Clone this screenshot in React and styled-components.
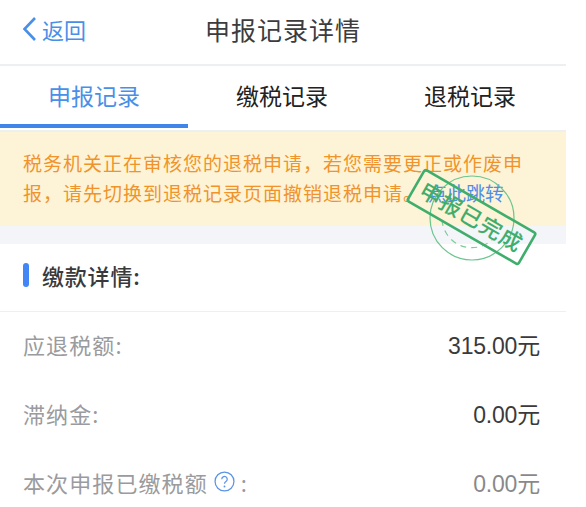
import styled, { createGlobalStyle } from 'styled-components'

const cjk = `"Noto Sans CJK SC", "Liberation Sans", sans-serif`

const Global = createGlobalStyle`
  html, body { margin: 0; padding: 0; background: #fff; }
  body { font-family: ${cjk}; overflow: hidden; }
`

const Page = styled.div`
  width: 566px;
  height: 507px;
  overflow: hidden;
  position: relative;
  background: #fff;
`

const Header = styled.header`
  height: 64px;
  display: flex;
  align-items: center;
  justify-content: center;
  position: relative;
  border-bottom: 2px solid #eeeff1;
`

const Back = styled.div`
  position: absolute;
  left: 22px;
  top: 14px;
  display: flex;
  align-items: center;
  gap: 5px;
  color: #4a8fe7;
  font-size: 22px;
  line-height: 30px;
`

const Title = styled.h1`
  margin: 0 0 7px 0;
  font-size: 25px;
  font-weight: 400;
  color: #3c3c3e;
  letter-spacing: 1px;
`

const Tabs = styled.nav`
  height: 64px;
  display: flex;
  padding-right: 2px;
  border-bottom: 2px solid #eeeff1;
`

const Tab = styled.div`
  flex: 1;
  display: flex;
  align-items: center;
  justify-content: center;
  margin-bottom: 2px;
  font-size: 23px;
  color: ${p => (p.$active ? '#4a8fe7' : '#222')};
  border-bottom: 4px solid ${p => (p.$active ? '#4285e8' : 'transparent')};
`

const Notice = styled.div`
  height: 94px;
  padding: 16px 36px 0 23px;
  box-sizing: border-box;
  background: #fdf3d6;
  color: #f0932b;
  font-size: 19px;
  line-height: 30px;
  letter-spacing: 1px;
`

const Jump = styled.span`
  color: #4f8ee8;
  letter-spacing: 0;
  margin-left: 5px;
`

const Gap = styled.div`
  height: 18px;
  background: #f3f5f8;
`

const SectionTitle = styled.div`
  height: 67px;
  box-sizing: content-box;
  display: flex;
  align-items: center;
  gap: 13px;
  padding-left: 23px;
  border-bottom: 1px solid #eeeff1;
  font-size: 22px;
  font-weight: 500;
  color: #3a3a3c;
  letter-spacing: 0.8px;
`

const SectionText = styled.span`
  margin-bottom: 6px;
`

const Bar = styled.span`
  width: 6px;
  height: 24px;
  margin-bottom: 5px;
  border-radius: 3px;
  background: #4285f4;
`

const Row = styled.div`
  height: 69px;
  box-sizing: border-box;
  display: flex;
  align-items: center;
  justify-content: space-between;
  padding: 0 26px 6px 23px;
`

const Label = styled.div`
  display: flex;
  align-items: center;
  gap: 6px;
  font-size: 22px;
  color: #9a9b9e;
  letter-spacing: 1.1px;
`

const Value = styled.div`
  font-size: 23px;
  color: #3a3a3c;
  letter-spacing: -0.2px;
  font-family: "Liberation Sans", ${cjk};
  opacity: ${p => (p.$faded ? 0.6 : 1)};
`

const Stamp = styled.svg`
  position: absolute;
  left: 400px;
  top: 160px;
  pointer-events: none;
`

const StampText = styled.text`
  font-family: ${cjk};
  font-size: 22px;
  font-weight: 500;
  fill: #3fae6d;
  letter-spacing: 1px;
  text-anchor: middle;
`

export default function App() {
  return (
    <Page>
      <Global />
      <Header>
        <Back>
          <svg width="15" height="26" viewBox="0 0 15 26">
            <path d="M13 2 L2.5 13 L13 24" fill="none" stroke="#4a8fe7" strokeWidth="2.6" />
          </svg>
          返回
        </Back>
        <Title>申报记录详情</Title>
      </Header>
      <Tabs>
        <Tab $active>申报记录</Tab>
        <Tab>缴税记录</Tab>
        <Tab>退税记录</Tab>
      </Tabs>
      <Notice>
        税务机关正在审核您的退税申请，若您需要更正或作废申报，请先切换到退税记录页面撤销退税申请。<Jump>点此跳转</Jump>
      </Notice>
      <Gap />
      <SectionTitle>
        <Bar />
        <SectionText>缴款详情:</SectionText>
      </SectionTitle>
      <Row>
        <Label>应退税额:</Label>
        <Value>315.00元</Value>
      </Row>
      <Row>
        <Label>滞纳金:</Label>
        <Value>0.00元</Value>
      </Row>
      <Row>
        <Label>
          本次申报已缴税额
          <svg width="21" height="21" viewBox="0 0 20 20">
            <circle cx="10" cy="10" r="9" fill="none" stroke="#5a94e6" strokeWidth="1.2" />
            <path d="M7.4 7.8a2.6 2.6 0 1 1 4 2.2c-.9.6-1.4 1-1.4 2.2" fill="none" stroke="#5a94e6" strokeWidth="1.2" />
            <circle cx="10" cy="14.8" r="0.9" fill="#5a94e6" />
          </svg>
          :
        </Label>
        <Value $faded>0.00元</Value>
      </Row>
      <Stamp width="145" height="115" viewBox="0 0 145 115">
        <circle cx="72" cy="58" r="42" fill="none" stroke="#6cc48f" strokeWidth="1.2" />
        <path d="M42 60 A30 30 0 0 0 92 80" fill="none" stroke="#7ccb9c" strokeWidth="1.2" strokeDasharray="6 5" />
        <g transform="rotate(30 71.5 57)">
          <rect x="7.5" y="39" width="128" height="36" rx="2" fill="none" stroke="#3fae6d" strokeWidth="2.6" />
          <StampText x="71.5" y="65">申报已完成</StampText>
        </g>
      </Stamp>
    </Page>
  )
}
